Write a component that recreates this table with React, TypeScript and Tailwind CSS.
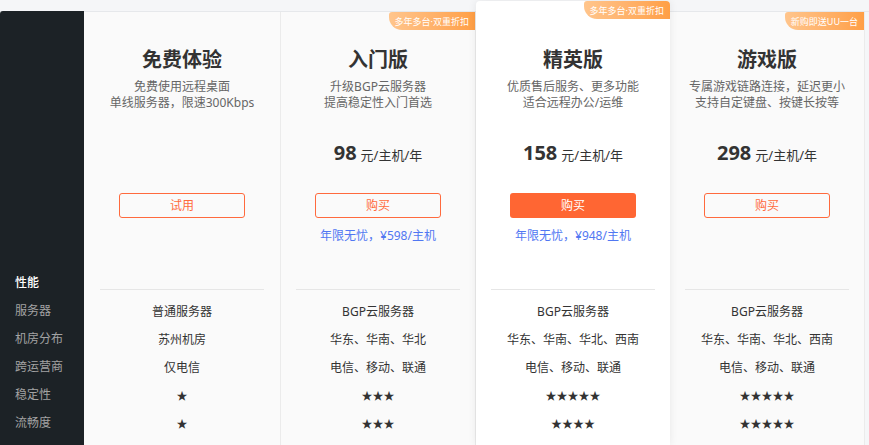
import React from 'react';

interface Plan {
  title: string;
  desc: string[];
  price?: string;
  button: string;
  filled?: boolean;
  note?: string;
  badge?: string;
  featured?: boolean;
  rows: string[];
}

const labels = ['服务器', '机房分布', '跨运营商', '稳定性', '流畅度'];

const plans: Plan[] = [
  {
    title: '免费体验',
    desc: ['免费使用远程桌面', '单线服务器，限速300Kbps'],
    button: '试用',
    rows: ['普通服务器', '苏州机房', '仅电信', '★', '★'],
  },
  {
    title: '入门版',
    desc: ['升级BGP云服务器', '提高稳定性入门首选'],
    price: '98',
    button: '购买',
    note: '年限无忧，¥598/主机',
    badge: '多年多台·双重折扣',
    rows: ['BGP云服务器', '华东、华南、华北', '电信、移动、联通', '★★★', '★★★'],
  },
  {
    title: '精英版',
    desc: ['优质售后服务、更多功能', '适合远程办公/运维'],
    price: '158',
    button: '购买',
    filled: true,
    note: '年限无忧，¥948/主机',
    badge: '多年多台·双重折扣',
    featured: true,
    rows: ['BGP云服务器', '华东、华南、华北、西南', '电信、移动、联通', '★★★★★', '★★★★'],
  },
  {
    title: '游戏版',
    desc: ['专属游戏链路连接，延迟更小', '支持自定键盘、按键长按等'],
    price: '298',
    button: '购买',
    badge: '新购即送UU一台',
    rows: ['BGP云服务器', '华东、华南、华北、西南', '电信、移动、联通', '★★★★★', '★★★★★'],
  },
];

function PlanColumn({ plan, width }: { plan: Plan; width: string }) {
  const base = plan.featured
    ? 'relative -mt-[11px] pt-[11px] bg-white rounded-t-[4px] shadow-[0_0_8px_rgba(0,0,0,0.08)] z-10'
    : 'relative bg-[#fafafa] border-r border-[#ebebeb]';

  return (
    <div className={`${base} ${width} flex flex-col`}>
      {plan.badge && (
        <div
          className={`absolute right-0 top-0 h-[18px] px-[6px] flex items-center rounded-bl-[13px] rounded-tl-[3px] bg-gradient-to-r from-[#ffc58c] to-[#ff9f45] text-white text-[9px] leading-none ${
            plan.featured ? 'rounded-tr-[4px]' : ''
          }`}
        >
          {plan.badge}
        </div>
      )}

      {/* header block, fixed height so the rows line up */}
      <div className="h-[277px] flex flex-col items-center">
        <div className="mt-[35px] text-[20px] leading-[26px] font-bold text-[#333]">{plan.title}</div>
        <div className="mt-[6px] text-[12px] leading-[16px] text-[#666] text-center">
          {plan.desc.map((line) => (
            <div key={line}>{line}</div>
          ))}
        </div>
        <div className="mt-[28px] h-[28px] flex items-baseline gap-[4px] text-[#333]">
          {plan.price && (
            <>
              <span className="text-[20px] leading-[28px] font-bold">{plan.price}</span>
              <span className="text-[13px]">元/主机/年</span>
            </>
          )}
        </div>
        <button
          className={`mt-[26px] w-[126px] h-[25px] rounded-[3px] text-[12px] flex items-center justify-center ${
            plan.filled
              ? 'bg-[#ff6633] text-white'
              : 'border border-[#ff6a3d] text-[#ff6a3d] bg-transparent'
          }`}
        >
          {plan.button}
        </button>
        {plan.note && <div className="mt-[9px] text-[12px] leading-[18px] text-[#5177f2]">{plan.note}</div>}
      </div>

      <div className="mx-auto w-[164px] border-t border-[#e6e6e6]" />

      <div className="pt-[8px] flex flex-col items-center text-[12px] text-[#333]">
        {plan.rows.map((r, i) => (
          <div key={i} className={`h-[28px] flex items-center ${r.startsWith('★') ? 'text-[11px]' : ''}`}>
            {r}
          </div>
        ))}
      </div>
    </div>
  );
}

export default function App() {
  return (
    <div
      className="w-[869px] h-[445px] overflow-hidden bg-[#f5f6f8]"
      style={{ fontFamily: '"Noto Sans", "Noto Sans CJK SC", sans-serif' }}
    >
      <div className="mt-[11px] border-t border-[#e6e8eb] flex h-[434px]">
        {/* sidebar */}
        <div className="w-[84px] shrink-0 bg-[#1c2226] rounded-tl-[3px] -mt-px pt-[258px] pl-[15px] text-[12px]">
          <div className="h-[28px] flex items-center text-white font-medium">性能</div>
          {labels.map((l) => (
            <div key={l} className="h-[28px] flex items-center text-[#a3a3a3]">
              {l}
            </div>
          ))}
        </div>
        <PlanColumn plan={plans[0]} width="w-[197px]" />
        <PlanColumn plan={plans[1]} width="w-[195px]" />
        <PlanColumn plan={plans[2]} width="w-[194px]" />
        <PlanColumn plan={plans[3]} width="w-[195px]" />
      </div>
    </div>
  );
}
